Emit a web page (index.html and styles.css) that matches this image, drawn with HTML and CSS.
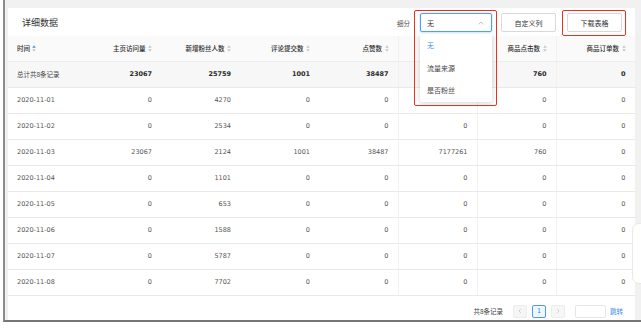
FILE: index.html
```html
<!DOCTYPE html>
<html lang="zh-CN">
<head>
<meta charset="utf-8">
<title>详细数据</title>
<link rel="stylesheet" href="styles.css">
</head>
<body>
<div class="frame">
  <div class="card">
    <div class="bar">
      <div class="title">详细数据</div>
      <div class="tools">
        <span class="label">细分</span>
        <div class="select-wrap">
          <div class="select">
            <span>无</span>
            <svg class="chev" width="6" height="4" viewBox="0 0 6 4"><path d="M0.6 3.4 L3 1 L5.4 3.4" fill="none" stroke="#b5b5b5" stroke-width="0.8"/></svg>
          </div>
          <ul class="dropdown">
            <li class="active">无</li>
            <li>流量来源</li>
            <li>是否粉丝</li>
          </ul>
        </div>
        <button class="btn">自定义列</button>
        <button class="btn">下载表格</button>
      </div>
    </div>
    <table class="grid">
      <colgroup>
        <col class="c-time"><col><col><col><col><col><col><col>
      </colgroup>
      <thead>
        <tr>
          <th class="left">时间 <svg class="sort" width="4" height="7" viewBox="0 0 8 14"><path d="M4 0.5 L7.5 5.5 L0.5 5.5 Z" fill="#4a90e2"/><path d="M0.5 8.5 L7.5 8.5 L4 13.5 Z" fill="#c4c4c4"/></svg></th>
          <th>主页访问量 <svg class="sort" width="4" height="7" viewBox="0 0 8 14"><path d="M4 0.5 L7.5 5.5 L0.5 5.5 Z" fill="#c4c4c4"/><path d="M0.5 8.5 L7.5 8.5 L4 13.5 Z" fill="#c4c4c4"/></svg></th>
          <th>新增粉丝人数 <svg class="sort" width="4" height="7" viewBox="0 0 8 14"><path d="M4 0.5 L7.5 5.5 L0.5 5.5 Z" fill="#c4c4c4"/><path d="M0.5 8.5 L7.5 8.5 L4 13.5 Z" fill="#c4c4c4"/></svg></th>
          <th>评论提交数 <svg class="sort" width="4" height="7" viewBox="0 0 8 14"><path d="M4 0.5 L7.5 5.5 L0.5 5.5 Z" fill="#c4c4c4"/><path d="M0.5 8.5 L7.5 8.5 L4 13.5 Z" fill="#c4c4c4"/></svg></th>
          <th>点赞数 <svg class="sort" width="4" height="7" viewBox="0 0 8 14"><path d="M4 0.5 L7.5 5.5 L0.5 5.5 Z" fill="#c4c4c4"/><path d="M0.5 8.5 L7.5 8.5 L4 13.5 Z" fill="#c4c4c4"/></svg></th>
          <th class="ln">播放量 <svg class="sort" width="4" height="7" viewBox="0 0 8 14"><path d="M4 0.5 L7.5 5.5 L0.5 5.5 Z" fill="#c4c4c4"/><path d="M0.5 8.5 L7.5 8.5 L4 13.5 Z" fill="#c4c4c4"/></svg></th>
          <th class="ln">商品点击数 <svg class="sort" width="4" height="7" viewBox="0 0 8 14"><path d="M4 0.5 L7.5 5.5 L0.5 5.5 Z" fill="#c4c4c4"/><path d="M0.5 8.5 L7.5 8.5 L4 13.5 Z" fill="#c4c4c4"/></svg></th>
          <th class="ln">商品订单数 <svg class="sort" width="4" height="7" viewBox="0 0 8 14"><path d="M4 0.5 L7.5 5.5 L0.5 5.5 Z" fill="#c4c4c4"/><path d="M0.5 8.5 L7.5 8.5 L4 13.5 Z" fill="#c4c4c4"/></svg></th>
        </tr>
      </thead>
      <tbody>
        <tr class="sum"><td class="left">总计共8条记录</td><td>23067</td><td>25759</td><td>1001</td><td>38487</td><td class="ln">7177261</td><td class="ln">760</td><td class="ln">0</td></tr>
        <tr><td class="left">2020-11-01</td><td>0</td><td>4270</td><td>0</td><td>0</td><td class="ln">0</td><td class="ln">0</td><td class="ln">0</td></tr>
        <tr><td class="left">2020-11-02</td><td>0</td><td>2534</td><td>0</td><td>0</td><td class="ln">0</td><td class="ln">0</td><td class="ln">0</td></tr>
        <tr><td class="left">2020-11-03</td><td>23067</td><td>2124</td><td>1001</td><td>38487</td><td class="ln">7177261</td><td class="ln">760</td><td class="ln">0</td></tr>
        <tr><td class="left">2020-11-04</td><td>0</td><td>1101</td><td>0</td><td>0</td><td class="ln">0</td><td class="ln">0</td><td class="ln">0</td></tr>
        <tr><td class="left">2020-11-05</td><td>0</td><td>653</td><td>0</td><td>0</td><td class="ln">0</td><td class="ln">0</td><td class="ln">0</td></tr>
        <tr><td class="left">2020-11-06</td><td>0</td><td>1588</td><td>0</td><td>0</td><td class="ln">0</td><td class="ln">0</td><td class="ln">0</td></tr>
        <tr><td class="left">2020-11-07</td><td>0</td><td>5787</td><td>0</td><td>0</td><td class="ln">0</td><td class="ln">0</td><td class="ln">0</td></tr>
        <tr><td class="left">2020-11-08</td><td>0</td><td>7702</td><td>0</td><td>0</td><td class="ln">0</td><td class="ln">0</td><td class="ln">0</td></tr>
      </tbody>
    </table>
    <div class="footer">
      <span class="total">共8条记录</span>
      <span class="pg pg-nav"><svg width="4" height="6" viewBox="0 0 4 6"><path d="M3 0.8 L1 3 L3 5.2" fill="none" stroke="#c8c8c8" stroke-width="0.8"/></svg></span>
      <span class="pg pg-cur">1</span>
      <span class="pg pg-nav"><svg width="4" height="6" viewBox="0 0 4 6"><path d="M1 0.8 L3 3 L1 5.2" fill="none" stroke="#c8c8c8" stroke-width="0.8"/></svg></span>
      <span class="jump-input"></span>
      <a class="jump">跳转</a>
    </div>
  </div>
  <div class="mark mark-select"></div>
  <div class="mark mark-download"></div>
  <div class="side-float"></div>
</div>
</body>
</html>
```
FILE: styles.css
```css
* { box-sizing: border-box; }

html, body {
  margin: 0;
  padding: 0;
  background: #ffffff;
  font-family: "DejaVu Sans", "Noto Sans CJK SC", sans-serif;
  color: #333;
}

.frame {
  position: relative;
  margin-left: 3px;
  width: 638px;
  height: 322px;
  padding: 8px 6px 0 3px;
  background: #f1f1f1;
  border-left: 2px solid #8c8c8c;
  border-bottom: 2px solid #767676;
  overflow: hidden;
}

.card {
  width: 627px;
  height: 312px;
  background: #ffffff;
  display: flex;
  flex-direction: column;
}

.bar {
  display: flex;
  align-items: center;
  justify-content: space-between;
  height: 28px;
  padding: 5px 13px 4px 14px;
}

.title {
  font-family: "Noto Sans CJK SC", sans-serif;
  font-size: 9px;
  color: #333;
  letter-spacing: 0;
}

.tools {
  display: flex;
  align-items: center;
}

.label {
  font-family: "Noto Sans CJK SC", sans-serif;
  font-size: 6.5px;
  color: #555;
  margin-right: 10px;
}

.select-wrap {
  position: relative;
  margin-right: 9px;
}

.select {
  width: 72px;
  height: 19px;
  border: 1px solid #4aa3ff;
  border-radius: 2px;
  background: #fff;
  display: flex;
  align-items: center;
  justify-content: space-between;
  padding: 0 7px 0 6px;
  font-family: "Noto Sans CJK SC", sans-serif;
  font-size: 7px;
  color: #333;
  box-shadow: 0 0 0 1px rgba(24, 144, 255, 0.12);
}

.chev { display: block; }

.dropdown {
  position: absolute;
  top: 21px;
  left: 0;
  width: 72px;
  margin: 0;
  padding: 0;
  list-style: none;
  background: #fff;
  border-radius: 2px;
  box-shadow: 0 1px 5px rgba(0, 0, 0, 0.18);
  z-index: 5;
}

.dropdown li {
  height: 22.5px;
  line-height: 22.5px;
  padding-left: 7px;
  font-family: "Noto Sans CJK SC", sans-serif;
  font-size: 7px;
  color: #444;
}

.dropdown li.active { color: #3a8ee6; }

.btn {
  width: 55px;
  height: 19px;
  margin: 0 0 0 0;
  padding: 0;
  border: 1px solid #d9d9d9;
  border-radius: 2px;
  background: #fff;
  font-family: "Noto Sans CJK SC", sans-serif;
  font-size: 7px;
  color: #333;
}

.btn + .btn { margin-left: 11px; }

.grid {
  width: 627px;
  border-collapse: collapse;
  table-layout: fixed;
}

.grid col { width: 79px; }
.grid col.c-time { width: 74px; }

.grid th,
.grid td {
  padding: 0 9px;
  text-align: right;
  white-space: nowrap;
  overflow: hidden;
}

.grid th {
  height: 25px;
  background: #fafafa;
  font-family: "Noto Sans CJK SC", sans-serif;
  font-size: 6.5px;
  font-weight: 500;
  color: #2b2b2b;
  border-bottom: 1px solid #ededed;
}

.grid td {
  height: 26px;
  font-size: 6.5px;
  color: #555;
  border-bottom: 1px solid #e9e9e9;
}

.grid .left { text-align: left; }

.grid .ln { border-left: 1px solid #f1f1f1; }

.grid tr > :last-child { border-right: 1px solid #f1f1f1; }

.grid .sum td {
  background: #f7f7f7;
  font-weight: bold;
  color: #2b2b2b;
}

.grid .sum td.left {
  font-family: "Noto Sans CJK SC", sans-serif;
  font-weight: normal;
  color: #444;
}

.sort {
  display: inline-block;
  vertical-align: -1px;
  margin-left: 1px;
}

.footer {
  flex: 1;
  display: flex;
  justify-content: flex-end;
  align-items: flex-start;
  padding: 9px 12px 0 0;
}

.total {
  font-family: "Noto Sans CJK SC", sans-serif;
  font-size: 6.5px;
  line-height: 13px;
  color: #444;
  margin-right: 10px;
}

.pg {
  width: 14px;
  height: 13px;
  border-radius: 2px;
  display: flex;
  align-items: center;
  justify-content: center;
  font-size: 6.5px;
}

.pg-nav {
  background: #f6f6f6;
  border: 1px solid #ececec;
}

.pg-cur {
  margin: 0 5px;
  background: #eef6ff;
  border: 1px solid #4a9bf0;
  color: #2f86e8;
}

.jump-input {
  width: 31px;
  height: 13px;
  margin-left: 10px;
  border: 1px solid #e6e6e6;
  border-radius: 2px;
  background: #fff;
}

.jump {
  margin-left: 4px;
  font-family: "Noto Sans CJK SC", sans-serif;
  font-size: 6.5px;
  line-height: 13px;
  color: #3a8ee6;
}

.mark {
  position: absolute;
  border: 1.5px solid #e8321f;
  border-radius: 2px;
  z-index: 10;
}

.mark-select {
  left: 409px;
  top: 10px;
  width: 83px;
  height: 96px;
}

.mark-download {
  left: 557px;
  top: 10px;
  width: 64px;
  height: 26px;
}

.side-float {
  position: absolute;
  left: 627px;
  top: 223px;
  width: 20px;
  height: 61px;
  border: 1px solid #e9e9e9;
  border-radius: 7px;
  background: #fff;
}
```
